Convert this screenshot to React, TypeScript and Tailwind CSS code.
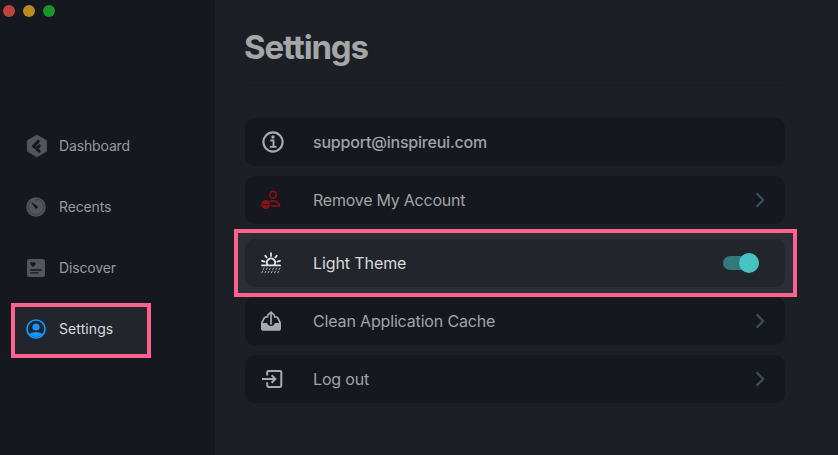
import React from "react";

const DashboardIcon = () => (
  <svg width="22" height="24" viewBox="0 0 22 24" className="-mr-px">
    <path d="M10.9 1 20.6 6.500v10.800L10.900 23 1.200 17.300V6.500z" fill="#53555a" stroke="#53555a" strokeWidth=".6" strokeLinejoin="round" />
    <path d="M12.300 7.400 7.400 12.200l1.100 1M13.300 11.800 10.500 14.500l2.700 2.700" fill="none" stroke="#15181f" strokeWidth="3" strokeLinecap="round" strokeLinejoin="round" />
  </svg>
);

const RecentsIcon = () => (
  <svg width="20" height="20" viewBox="0 0 20 20">
    <circle cx="10" cy="10" r="9.800" fill="#53555a" />
    <path d="M10 2.200v2.400M10 2.200a7.800 7.800 0 1 1-5 1.800" fill="none" stroke="#36383e" strokeWidth=".8" />
    <path d="m5.800 5.800 5.300 3.400a1.200 1.200 0 0 1-1.700 1.800z" fill="#15181f" stroke="#15181f" strokeWidth=".8" />
  </svg>
);

const DiscoverIcon = () => (
  <svg width="20" height="20" viewBox="0 0 20 20">
    <rect x="1" y="1" width="18" height="18" rx="2.500" fill="#53555a" />
    <path d="M7 9 4.500 6.400C3.500 5 5.700 2.900 7 4.700 8.300 2.900 10.500 5 9.500 6.400z" fill="#15181f" />
    <path d="M4.800 12h10.400M4.800 14.900h7.200" stroke="#15181f" strokeWidth="1.400" strokeLinecap="round" />
  </svg>
);

const ProfileIcon = () => (
  <svg width="20" height="20" viewBox="0 0 20 20">
    <circle cx="10" cy="10" r="9" fill="none" stroke="#1296ff" strokeWidth="1.700" />
    <circle cx="10" cy="8" r="3.600" fill="#1296ff" />
    <path d="M3.500 15.300c3.200-3.200 9.800-3.200 13 0a8.800 8.800 0 0 1-13 0z" fill="#1296ff" />
  </svg>
);

const InfoIcon = () => (
  <svg width="22" height="22" viewBox="0 0 22 22" fill="none" stroke="#a9aaab">
    <circle cx="11" cy="11" r="9.600" strokeWidth="2.100" />
    <circle cx="10.900" cy="6" r="1.700" fill="#a9aaab" stroke="none" />
    <path d="M8.300 9.500h3.200v6M7.900 15.900h6.600" strokeWidth="1.900" />
  </svg>
);

const RemoveUserIcon = () => (
  <svg width="20" height="20" viewBox="0 0 20 20" fill="none" stroke="#8c1113" strokeWidth="1.600">
    <circle cx="12" cy="4.700" r="3.300" />
    <path d="M8.600 11.600c4-1.800 9.600 0 10 4.400H10" />
    <circle cx="4.800" cy="14.600" r="4.500" fill="#8c1113" stroke="none" />
    <path d="M2.300 14.600h5" stroke="#2b1015" strokeWidth="1.200" />
  </svg>
);

const SunHazeIcon = () => (
  <svg width="20" height="22" viewBox="0 0 20 22" fill="none" stroke="#e4e5e6" strokeWidth="1.800" strokeLinecap="round">
    <path d="M10 1.200v2.800M4.300 3.700l1.300 1.700M15.700 3.700l-1.300 1.700M1.100 8.800l2.300.8M18.900 8.800l-2.300.8" />
    <path d="M6.600 12.900a4.100 4.100 0 1 1 6.800 0M1 13.400h18" />
    <path d="m3 16-.8 1.500m4-1.500-.8 1.500M9.400 16l-.8 1.500m4-1.500-.8 1.500m4-1.500-.8 1.500m4-1.500-.8 1.500M1.600 19.200.8 20.800m4-1.600L4 20.800m4-1.600-.8 1.600m4-1.600-.8 1.600m4-1.600-.8 1.600m4-1.600-.8 1.600" strokeWidth=".9" stroke="#c4c6c8" />
  </svg>
);

const CacheIcon = () => (
  <svg width="20" height="20" viewBox="0 0 20 20" fill="none" stroke="#a9aaab">
    <path d="M0 12h6.200c.4 1.900 1.800 2.900 3.800 2.900s3.400-1 3.800-2.900H20v5.400c0 1.500-1 2.400-2.400 2.400H2.400C1 19.800 0 18.900 0 17.400z" fill="#a9aaab" stroke="none" />
    <path d="M7.300 5.800H5.200C4.300 5.800 3.700 6.200 3.200 7L.7 12M12.700 5.800h2.100c.9 0 1.500.4 2 1.200l2.500 5" strokeWidth="1.700" />
    <path d="M10 13V1.200M6.800 4.100 10 1l3.200 3.100" strokeWidth="1.700" strokeLinecap="round" strokeLinejoin="round" />
  </svg>
);

const LogoutIcon = () => (
  <svg width="22" height="20" viewBox="0 0 22 20" fill="none" stroke="#a9aaab" strokeWidth="2">
    <path d="M6.200 6.500V3.200c0-.8.500-1.300 1.300-1.300h11.500c.8 0 1.300.5 1.300 1.300v13.400c0 .8-.5 1.300-1.300 1.300H7.500c-.8 0-1.300-.5-1.300-1.300v-3.300" />
    <path d="M1 10h13M10.600 6.200l3.800 3.800-3.800 3.800" />
  </svg>
);

const Chevron = () => (
  <svg width="10" height="16" viewBox="0 0 10 16" className="mr-5">
    <path d="m1.500 1.300 6.700 6.700-6.700 6.700" fill="none" stroke="#3c4f58" strokeWidth="2.300" />
  </svg>
);

type NavProps = { icon: React.ReactNode; label: string; active?: boolean };

function NavItem({ icon, label, active }: NavProps) {
  return (
    <div className={`ml-[11px] flex h-[55px] w-[140px] items-center border-4 pb-[3px] pl-[11px] text-[14px] ${active ? "border-[#ff6190] bg-[#22252c] text-[#d9dadb]" : "border-transparent text-[#999a9d]"}`}>
      <span className="flex w-[33px] items-center">{icon}</span>
      <span className={`pb-0.5 whitespace-nowrap ${active ? "tracking-[0.006em]" : "tracking-[-0.010em]"}`}>{label}</span>
    </div>
  );
}

type RowProps = { icon: React.ReactNode; label: string; tone?: string; spacing?: string; children?: React.ReactNode };

function Row({ icon, label, tone = "bg-[#15181f] text-[#a2a3a5]", spacing = "tracking-[-0.010em]", children }: RowProps) {
  return (
    <div className={`flex h-12 items-center rounded-[10px] text-[16px] ${tone}`}>
      <span className="flex w-[68px] items-center pl-4">{icon}</span>
      <span className={`flex-1 whitespace-nowrap ${spacing}`}>{label}</span>
      {children}
    </div>
  );
}

export default function App() {
  return (
    <div className="flex h-[455px] w-[838px] overflow-hidden bg-[#1c1f26] font-['Inter',sans-serif]">
      <aside className="w-[215px] shrink-0 bg-[#15181f]">
        <div className="flex gap-2 pt-[5px] pl-[3px]">
          <i className="size-3 rounded-full bg-[#bd443e]" />
          <i className="size-3 rounded-full bg-[#bb891f]" />
          <i className="size-3 rounded-full bg-[#1b942d]" />
        </div>
        <nav className="mt-[103px] flex flex-col gap-[6px]">
          <NavItem icon={<DashboardIcon />} label="Dashboard" />
          <NavItem icon={<RecentsIcon />} label="Recents" />
          <NavItem icon={<DiscoverIcon />} label="Discover" />
          <NavItem icon={<ProfileIcon />} label="Settings" active />
        </nav>
      </aside>
      <main className="w-[570px] pl-[30px]">
        <h1 className="-ml-px pt-[27px] text-[33px] leading-[40px] font-bold tracking-[-0.035em] text-[#a5a6a8]">Settings</h1>
        <div className="mt-[15px] h-[2px] bg-[#202123]" />
        <div className="mt-[34px] flex flex-col">
          <Row icon={<span className="pl-px"><InfoIcon /></span>} label="support@inspireui.com" tone="bg-[#15181f] text-[#a2a3a5] font-medium" spacing="tracking-[-0.013em]" />
          <div className="mt-[10px]">
            <Row icon={<RemoveUserIcon />} label="Remove My Account" spacing="tracking-[-0.015em]"><Chevron /></Row>
          </div>
          <div className="mt-[5px] -mr-[12px] -ml-[11px] border-4 border-[#ff6190] bg-[#2b2e36] py-[6px] pr-2 pl-[7px]">
            <Row icon={<SunHazeIcon />} label="Light Theme" tone="bg-[#22252c] text-[#d9dadb]" spacing="tracking-[-0.006em]">
              <span className="mr-[26px] flex h-[14px] w-9 items-center justify-end rounded-full bg-[#33787a]">
                <i className="size-5 rounded-full bg-[#45c3c1]" />
              </span>
            </Row>
          </div>
          <Row icon={<CacheIcon />} label="Clean Application Cache"><Chevron /></Row>
          <div className="mt-[10px]">
            <Row icon={<LogoutIcon />} label="Log out"><Chevron /></Row>
          </div>
        </div>
      </main>
    </div>
  );
}
